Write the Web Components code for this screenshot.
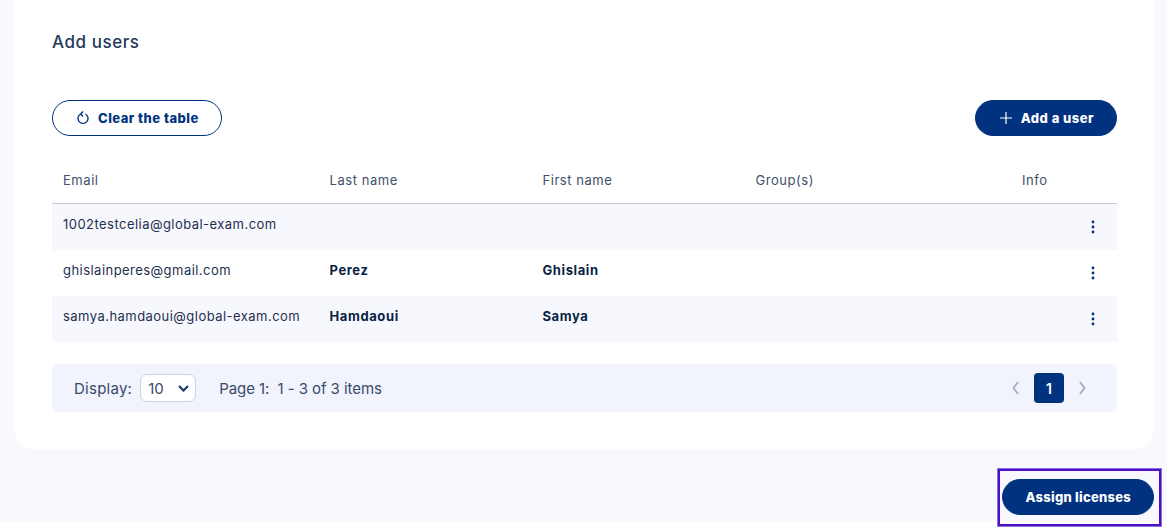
<!DOCTYPE html>
<html lang="en">
<head>
<meta charset="utf-8">
<title>Add users</title>
<style>
  html, body { margin: 0; height: 527px; overflow: hidden; background: #ffffff; }
  body { font-family: "Inter", "Liberation Sans", sans-serif; color: #0b1f44; }
  .assign { --pill-pad-left: 23px; --pill-track: .25px; position: relative; }
</style>
</head>
<body>
<assign-page>
  <users-panel title="Add users">
    <users-table></users-table>
    <table-pager></table-pager>
  </users-panel>
  <pill-button class="assign" slot="footer" filled>Assign licenses</pill-button>
</assign-page>

<script>
/**
 * Pill shaped action button, outlined by default, filled with the attribute
 */
class PillButton extends HTMLElement {
    constructor() {
        super();
        this.attachShadow({ mode: 'open' });
        this.shadowRoot.innerHTML = `
            <style>
                :host {
                    display: inline-flex;
                    align-items: center;
                    justify-content: center;
                    gap: 9px;
                    box-sizing: border-box;
                    height: 36px;
                    padding: 0 22px 0 var(--pill-pad-left, 24px);
                    border: 1px solid #00327f;
                    border-radius: 18px;
                    background: #ffffff;
                    color: #00327f;
                    font-size: 13px;
                    font-weight: 800;
                    letter-spacing: var(--pill-track, .48px);
                    white-space: nowrap;
                }
                :host([filled]) {
                    background: #00327f;
                    color: #ffffff;
                }
                ::slotted(svg) { flex: none; }
            </style>
            <slot name="icon"></slot>
            <slot></slot>
        `;
    }
}

class UsersTable extends HTMLElement {
    constructor() {
        super();
        this.attachShadow({ mode: 'open' });
    }

    connectedCallback() {
        this.render();
    }

    render() {
        const users = [
            { email: '1002testcelia@global-exam.com', last: '', first: '' },
            { email: 'ghislainperes@gmail.com', last: 'Perez', first: 'Ghislain' },
            { email: 'samya.hamdaoui@global-exam.com', last: 'Hamdaoui', first: 'Samya' }
        ];

        const rows = users.map(user => `
            <div class="row">
                <span class="email">${user.email}</span>
                <b>${user.last}</b>
                <b>${user.first}</b>
                <span></span>
                <svg class="more" width="4" height="14" viewBox="0 0 4 14" fill="#00327f">
                    <circle cx="2" cy="2" r="1.4"/><circle cx="2" cy="7" r="1.4"/><circle cx="2" cy="12" r="1.4"/>
                </svg>
            </div>
        `).join('');

        this.shadowRoot.innerHTML = `
            <style>
                :host { display: block; margin-top: 20px; font-size: 13px; }
                .head, .row {
                    display: grid;
                    grid-template-columns: 266.5px 213px 213px 266.5px 1fr;
                    padding-left: 11px;
                }
                .head {
                    height: 47px;
                    align-items: center;
                    border-bottom: 1px solid #c9cad9;
                    color: #3f4f6b;
                    font-size: 13px;
                    letter-spacing: .55px;
                }
                .head span { padding-top: 1px; }
                .row { height: 46px; align-items: center; color: #0b1f44; }
                .row:nth-child(odd) { background: #f7f8fe; }
                .row b { font-weight: 700; letter-spacing: .6px; margin-top: -6px; }
                .email { color: #1f2f4d; letter-spacing: .46px; margin-top: -6px; }
                .more { justify-self: end; margin-right: 22px; }
            </style>
            <div class="head">
                <span>Email</span><span>Last name</span><span>First name</span><span>Group(s)</span><span>Info</span>
            </div>
            <div class="rows">${rows}</div>
        `;
    }
}

class TablePager extends HTMLElement {
    constructor() {
        super();
        this.attachShadow({ mode: 'open' });
        this.shadowRoot.innerHTML = `
            <style>
                :host {
                    display: flex;
                    align-items: center;
                    box-sizing: border-box;
                    height: 48px;
                    margin-top: 22px;
                    padding: 0 22px;
                    border-radius: 8px;
                    background: #f1f3fd;
                    color: #3a4a6b;
                    font-size: 15px;
                }
                .label { letter-spacing: .25px; }
                .select {
                    display: flex;
                    align-items: center;
                    justify-content: space-between;
                    box-sizing: border-box;
                    width: 56px;
                    height: 28px;
                    margin-left: 8px;
                    padding: 0 6px 0 7px;
                    border: 1px solid #cdd0df;
                    border-radius: 7px;
                    background: #ffffff;
                }
                .info { margin-left: 23px; letter-spacing: -.07px; }
                .pages {
                    display: flex;
                    align-items: center;
                    gap: 15px;
                    margin-left: auto;
                    padding-right: 9px;
                }
                .current {
                    display: flex;
                    align-items: center;
                    justify-content: center;
                    width: 30px;
                    height: 30px;
                    border-radius: 4px;
                    background: #00327f;
                    color: #ffffff;
                    font-size: 14px;
                    font-weight: 600;
                }
            </style>
            <span class="label">Display:</span>
            <div class="select">
                <span>10</span>
                <svg width="11" height="7" viewBox="0 0 11 7" fill="none" stroke="#1f3a66" stroke-width="2.2">
                    <path d="M1 1l4.5 4.5L10 1"/>
                </svg>
            </div>
            <span class="info">Page 1:&nbsp; 1 - 3 of 3 items</span>
            <div class="pages">
                <svg width="7" height="14" viewBox="0 0 7 14" fill="none" stroke="#a4aec4" stroke-width="1.9">
                    <path d="M6 1L1.5 7 6 13"/>
                </svg>
                <span class="current">1</span>
                <svg width="7" height="14" viewBox="0 0 7 14" fill="none" stroke="#a4aec4" stroke-width="1.9">
                    <path d="M1 1l4.5 6L1 13"/>
                </svg>
            </div>
        `;
    }
}

class UsersPanel extends HTMLElement {
    constructor() {
        super();
        this.attachShadow({ mode: 'open' });
        this.shadowRoot.innerHTML = `
            <style>
                :host {
                    display: block;
                    box-sizing: border-box;
                    height: 449px;
                    padding: 32px 37px 0 38px;
                    border-radius: 0 0 20px 20px;
                    background: #ffffff;
                }
                h2 {
                    margin: 0;
                    color: #26395c;
                    font-size: 17px;
                    font-weight: 500;
                    letter-spacing: .55px;
                    line-height: 20px;
                }
                .actions {
                    display: flex;
                    justify-content: space-between;
                    margin-top: 48px;
                }
            </style>
            <h2></h2>
            <div class="actions">
                <pill-button>
                    <svg slot="icon" width="12" height="14" viewBox="0 0 12 14" fill="none" stroke="#00327f" stroke-width="1.4">
                        <path d="M3.6 3A5 5 0 1 0 8.4 3"/>
                        <path d="M6.2 0.6L3.6 3 6 5.4"/>
                    </svg>
                    Clear the table
                </pill-button>
                <pill-button filled>
                    <svg slot="icon" width="12" height="12" viewBox="0 0 12 12" fill="none" stroke="#ffffff" stroke-width="1.2">
                        <path d="M6 0v12M0 6h12"/>
                    </svg>
                    Add a user
                </pill-button>
            </div>
            <slot></slot>
        `;
    }

    connectedCallback() {
        this.shadowRoot.querySelector('h2').textContent = this.getAttribute('title');
    }
}

class AssignPage extends HTMLElement {
    constructor() {
        super();
        this.attachShadow({ mode: 'open' });
        this.shadowRoot.innerHTML = `
            <style>
                :host {
                    display: block;
                    box-sizing: border-box;
                    height: 521px;
                    padding: 0 13px 0 14px;
                    background: #f8f9ff;
                }
                .footer {
                    position: relative;
                    display: flex;
                    justify-content: flex-end;
                    padding-top: 30px;
                }
                /* highlight frame behind the submit button, runs past the page bottom */
                .frame {
                    position: absolute;
                    top: 20px;
                    right: -7px;
                    box-sizing: border-box;
                    width: 163px;
                    height: 57px;
                    border: 2px solid #4b0fc4;
                    outline: 1px solid #8c6fe0;
                    background: #f8f9ff;
                }
            </style>
            <slot></slot>
            <div class="footer">
                <div class="frame"></div>
                <slot name="footer"></slot>
            </div>
        `;
    }
}

customElements.define('pill-button', PillButton);
customElements.define('users-table', UsersTable);
customElements.define('table-pager', TablePager);
customElements.define('users-panel', UsersPanel);
customElements.define('assign-page', AssignPage);
</script>
</body>
</html>
